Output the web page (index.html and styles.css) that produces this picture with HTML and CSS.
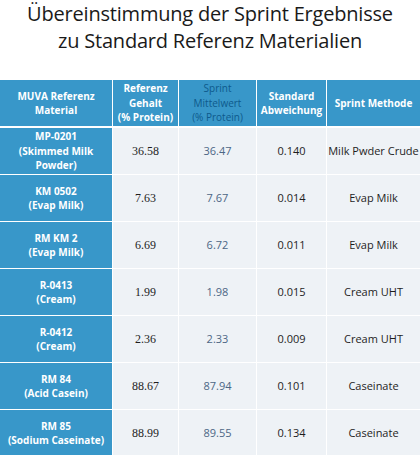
FILE: index.html
```html
<!DOCTYPE html>
<html>
<head>
    <title>Sprint Ergebnisse</title>
    <link rel="stylesheet" href="styles.css">
</head>
<body>
    <h1 class="title">Übereinstimmung der Sprint Ergebnisse<br>zu Standard Referenz Materialien</h1>
    <table class="results">
        <colgroup>
            <col class="col-material">
            <col class="col-ref">
            <col class="col-sprint">
            <col class="col-dev">
            <col class="col-method">
        </colgroup>
        <thead>
            <tr>
                <th>MUVA Referenz<br>Material</th>
                <th>Referenz<br>Gehalt<br>(% Protein)</th>
                <th class="sprint-head">Sprint<br>Mittelwert<br>(% Protein)</th>
                <th>Standard<br>Abweichung</th>
                <th>Sprint Methode</th>
            </tr>
        </thead>
        <tbody>
            <tr>
                <th>MP-0201<br>(Skimmed Milk<br>Powder)</th>
                <td class="ref">36.58</td>
                <td class="sprint">36.47</td>
                <td>0.140</td>
                <td>Milk Pwder Crude</td>
            </tr>
            <tr>
                <th>KM 0502<br>(Evap Milk)</th>
                <td class="ref">7.63</td>
                <td class="sprint">7.67</td>
                <td>0.014</td>
                <td>Evap Milk</td>
            </tr>
            <tr>
                <th>RM KM 2<br>(Evap Milk)</th>
                <td class="ref">6.69</td>
                <td class="sprint">6.72</td>
                <td>0.011</td>
                <td>Evap Milk</td>
            </tr>
            <tr>
                <th>R-0413<br>(Cream)</th>
                <td class="ref">1.99</td>
                <td class="sprint">1.98</td>
                <td>0.015</td>
                <td>Cream UHT</td>
            </tr>
            <tr>
                <th>R-0412<br>(Cream)</th>
                <td class="ref">2.36</td>
                <td class="sprint">2.33</td>
                <td>0.009</td>
                <td>Cream UHT</td>
            </tr>
            <tr>
                <th>RM 84<br>(Acid Casein)</th>
                <td class="ref">88.67</td>
                <td class="sprint">87.94</td>
                <td>0.101</td>
                <td>Caseinate</td>
            </tr>
            <tr>
                <th>RM 85<br>(Sodium Caseinate)</th>
                <td class="ref">88.99</td>
                <td class="sprint">89.55</td>
                <td>0.134</td>
                <td>Caseinate</td>
            </tr>
        </tbody>
    </table>
</body>
</html>
```

FILE: styles.css
```css
body {
    margin: 0;
    padding: 0;
    background-color: #ffffff;
    font-family: "Open Sans", "Liberation Sans", sans-serif;
}
.title {
    margin: 0;
    height: 79px;
    font-size: 20px;
    font-weight: normal;
    line-height: 27px;
    text-align: center;
    color: #1a1a1a;
    letter-spacing: -0.2px;
}
.results {
    width: 420px;
    table-layout: fixed;
    border-collapse: separate;
    border-spacing: 1px 1px;
    margin: 0 -1px;
    font-size: 10px;
}
.col-material { width: 112px; }
.col-ref { width: 65px; }
.col-sprint { width: 77px; }
.col-dev { width: 69px; }
.col-method { width: 93px; }
.results th,
.results td {
    height: 46px;
    padding: 0;
    text-align: center;
    vertical-align: middle;
    line-height: 14.5px;
}
.results th {
    background-color: #3897c9;
    color: #ffffff;
    font-weight: bold;
}
.results thead th {
    height: 46px;
    border-bottom: 1px solid #ffffff;
}
/* Sprint column heading is set in dark blue on the blue bar */
.results thead th.sprint-head {
    color: #0e5a8c;
    font-weight: normal;
}
.results td {
    background-color: #eef2f6;
    color: #1e1e1e;
    font-size: 11px;
}
/* Reference values are set in a serif face */
.results td.ref {
    font-family: "Liberation Serif", serif;
    font-size: 12px;
}
.results td.sprint {
    color: #4c6685;
}
```
